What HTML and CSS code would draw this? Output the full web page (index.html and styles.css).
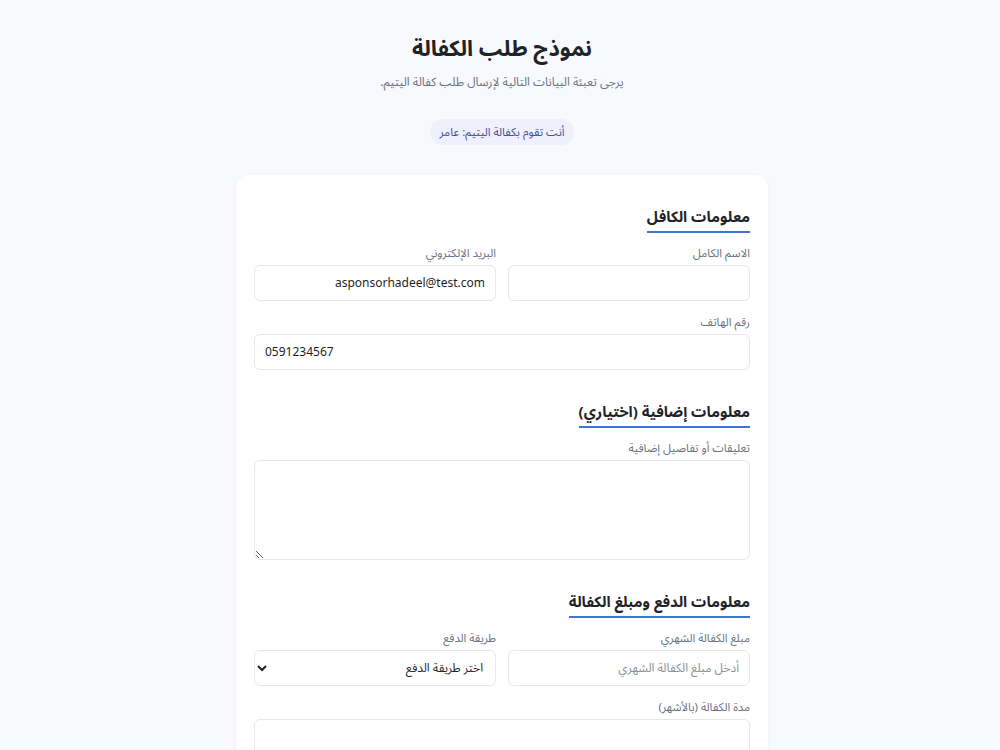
FILE: index.html
```html
<!DOCTYPE html>
<html lang="ar" dir="rtl">
<head>
<meta charset="utf-8">
<title>نموذج طلب الكفالة</title>
<link rel="stylesheet" href="styles.css">
</head>
<body>
<header class="page-head">
  <h1 class="page-title">نموذج طلب الكفالة</h1>
  <p class="page-sub">يرجى تعبئة البيانات التالية لإرسال طلب كفالة اليتيم.</p>
  <span class="badge">أنت تقوم بكفالة اليتيم: عامر</span>
</header>
<main class="card">
  <section class="section">
    <h2 class="section-title">معلومات الكافل</h2>
    <div class="row">
      <div class="field">
        <label class="label">الاسم الكامل</label>
        <input class="input" type="text">
      </div>
      <div class="field">
        <label class="label">البريد الإلكتروني</label>
        <input class="input" type="email" value="asponsorhadeel@test.com">
      </div>
    </div>
    <div class="field">
      <label class="label">رقم الهاتف</label>
      <input class="input input-ltr" type="tel" value="0591234567">
    </div>
  </section>
  <section class="section">
    <h2 class="section-title">معلومات إضافية (اختياري)</h2>
    <div class="field">
      <label class="label">تعليقات أو تفاصيل إضافية</label>
      <textarea class="input textarea"></textarea>
    </div>
  </section>
  <section class="section">
    <h2 class="section-title">معلومات الدفع ومبلغ الكفالة</h2>
    <div class="row">
      <div class="field">
        <label class="label">مبلغ الكفالة الشهري</label>
        <input class="input" type="text" placeholder="أدخل مبلغ الكفالة الشهري">
      </div>
      <div class="field">
        <label class="label">طريقة الدفع</label>
        <select class="input select"><option>اختر طريقة الدفع</option></select>
      </div>
    </div>
    <div class="field">
      <label class="label">مدة الكفالة (بالأشهر)</label>
      <input class="input" type="text">
    </div>
  </section>
</main>
</body>
</html>
```
FILE: styles.css
```css
* { box-sizing: border-box; }
body {
  margin: 0;
  padding: 0 0 0 4px;
  background: #f8f9fc;
  font-family: "Noto Sans Arabic", "Noto Sans", "DejaVu Sans", sans-serif;
  color: #1f2328;
}
.page-head {
  text-align: center;
  padding-top: 33px;
}
.page-title {
  margin: 0;
  font-size: 22px;
  line-height: 33px;
  font-weight: 700;
  color: #1f2328;
}
.page-sub {
  margin: 7px 0 0;
  font-size: 12px;
  line-height: 20px;
  color: #6b7280;
}
.badge {
  display: inline-block;
  margin-top: 26px;
  padding: 4px 10px;
  background: #eef0fb;
  color: #4b4f96;
  border-radius: 999px;
  font-size: 11.5px;
  line-height: 18px;
}
.card {
  width: 532px;
  margin: 27px auto 0;
  background: #fff;
  border-radius: 12px;
  box-shadow: 0 1px 4px rgba(20, 30, 60, 0.05);
  padding: 31px 18px 30px;
  display: flex;
  flex-direction: column;
  gap: 31px;
}
.section {
  display: flex;
  flex-direction: column;
  align-items: stretch;
  gap: 12px;
}
.section-title {
  align-self: flex-start;
  margin: 0 0 -1px;
  font-size: 15px;
  line-height: 22px;
  font-weight: 700;
  padding-bottom: 3px;
  border-bottom: 2px solid #3b74dc;
  color: #1f2328;
}
.row {
  display: grid;
  grid-template-columns: minmax(0, 1fr) minmax(0, 1fr);
  gap: 12px;
}
.field {
  display: flex;
  flex-direction: column;
  gap: 3px;
  min-width: 0;
}
.label {
  font-size: 11.5px;
  line-height: 18px;
  color: #6b7280;
}
.input {
  width: 100%;
  height: 36px;
  border: 1px solid #e5e7eb;
  border-radius: 6px;
  background: #fff;
  padding: 0 10px;
  font-family: inherit;
  font-size: 12px;
  color: #1f1f1f;
  outline: none;
}
.input::placeholder { color: #8a8f98; }
.input-ltr { direction: ltr; text-align: left; }
.textarea { height: 100px; resize: vertical; padding: 8px 10px; }
.select { padding: 0 8px; }
```
